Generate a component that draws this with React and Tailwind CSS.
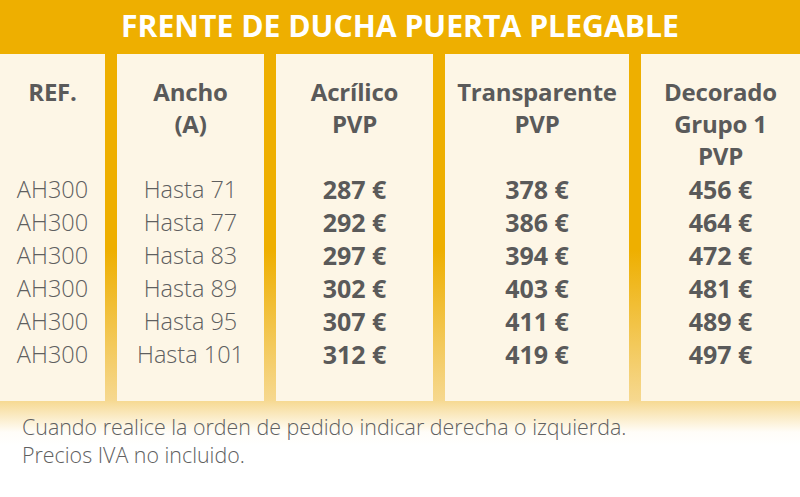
import React from 'react';

const rows = [
  ['AH300', 'Hasta 71', '287 €', '378 €', '456 €'],
  ['AH300', 'Hasta 77', '292 €', '386 €', '464 €'],
  ['AH300', 'Hasta 83', '297 €', '394 €', '472 €'],
  ['AH300', 'Hasta 89', '302 €', '403 €', '481 €'],
  ['AH300', 'Hasta 95', '307 €', '411 €', '489 €'],
  ['AH300', 'Hasta 101', '312 €', '419 €', '497 €'],
];

const columns = [
  { width: 'w-[105px]', head: ['REF.'], bold: false },
  { width: 'w-[147px]', head: ['Ancho', '(A)'], bold: false },
  { width: 'w-[157px]', head: ['Acrílico', 'PVP'], bold: true },
  { width: 'w-[184px]', head: ['Transparente', 'PVP'], bold: true },
  { width: 'flex-1', head: ['Decorado', 'Grupo 1', 'PVP'], bold: true },
];

const App = () => {
  return (
    <div
      className="w-[800px] h-[497px] overflow-hidden text-[#5f5f5f] bg-[linear-gradient(180deg,#eeaf00_0px,#eeaf00_250px,#f6d88f_400px,#fffdf8_432px,#ffffff_445px)]"
      style={{ fontFamily: '"Open Sans", "Noto Sans", sans-serif' }}
    >
      {/* Title bar */}
      <div className="h-[54px] flex items-center justify-center">
        <h1 className="text-white font-bold text-[30.2px] leading-none pb-[1px]">
          FRENTE DE DUCHA PUERTA PLEGABLE
        </h1>
      </div>

      {/* Table columns */}
      <div className="flex gap-[12px] h-[347px]">
        {columns.map((col, ci) => (
          <div
            key={ci}
            className={`${col.width} bg-[#fdf6e6] pt-[22px] flex flex-col items-center text-center`}
          >
            <div className="h-[97px] font-bold text-[24px] leading-[32px] tracking-[-0.2px] text-[#5a5a5a]">
              {col.head.map(line => (
                <div key={line}>{line}</div>
              ))}
            </div>
            {rows.map((r, ri) => (
              <div
                key={ri}
                className={`leading-[33px] ${
                  col.bold ? 'text-[25px] font-bold text-[#5a5a5a]' : 'text-[23.5px] font-light'
                }`}
              >
                {r[ci]}
              </div>
            ))}
          </div>
        ))}
      </div>

      {/* Notes */}
      <div className="pl-[22px] pt-[12px] text-[21.4px] leading-[28px] font-light text-[#606060]">
        <p>Cuando realice la orden de pedido indicar derecha o izquierda.</p>
        <p>Precios IVA no incluido.</p>
      </div>
    </div>
  );
};

export default App;
